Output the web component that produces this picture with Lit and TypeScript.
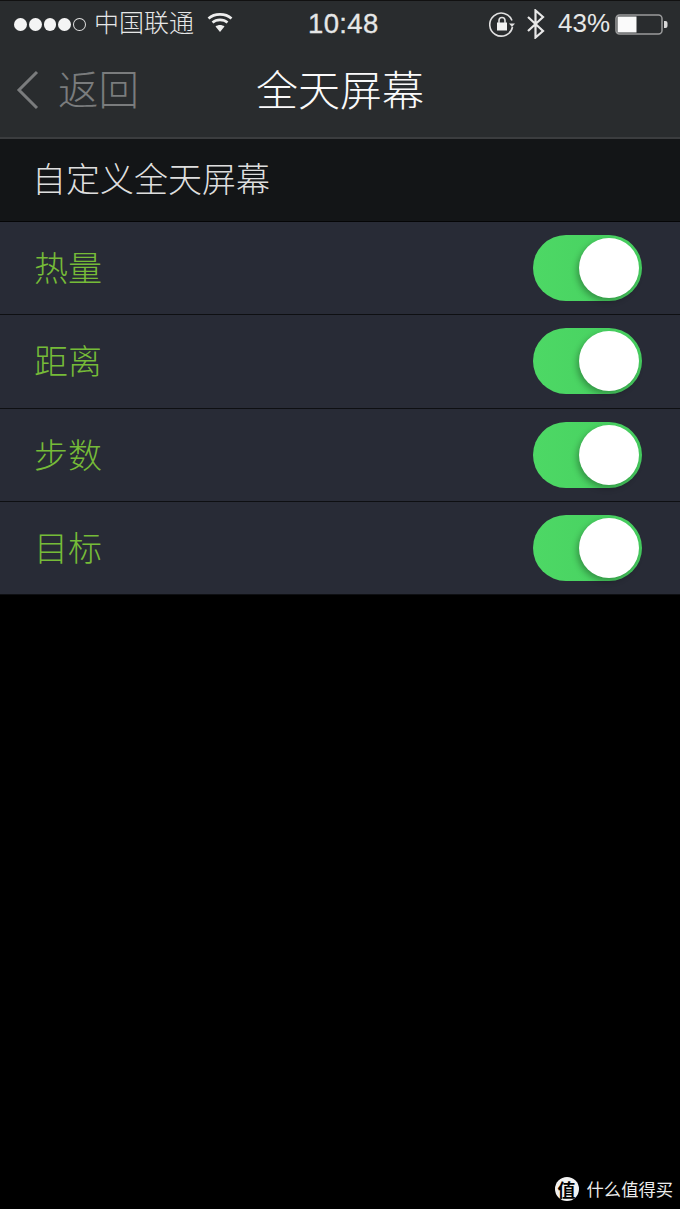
import { LitElement, html, css, svg } from "lit";
import { customElement } from "lit/decorators.js";

const ROWS = ["热量", "距离", "步数", "目标"];

@customElement("app-root")
export class AppRoot extends LitElement {
  static styles = css`
    :host {
      display: block;
      position: relative;
      width: 680px;
      height: 1209px;
      background: #000;
      overflow: hidden;
      font-family: "Noto Sans CJK SC", "Liberation Sans", sans-serif;
      font-weight: 300;
    }
    .top {
      background: #292c2e;
      border-top: 1px solid #111;
      height: 136px;
      border-bottom: 2px solid #3b3d3f;
    }
    .status {
      height: 45px;
      display: flex;
      align-items: center;
      color: #e6e7e7;
      padding: 0 0 0 14px;
    }
    .dots { display: flex; gap: 3px; width: 71px; margin-top: 1px; }
    .dot { width: 13px; height: 13px; border-radius: 50%; background: #f4f4f4; box-sizing: border-box; margin-right: -1px; }
    .dot.off { background: none; border: 1px solid #e0e0e0; }
    .carrier { font-size: 25px; line-height: 41px; height: 45px; width: 112px; margin-left: 9px; white-space: nowrap; }
    .status svg { display: block; flex: none; }
    .wifi { margin-left: 1px; margin-top: -2px; }
    .time {
      font-family: "Liberation Sans", sans-serif;
      font-size: 27.5px;
      font-weight: 400;
      width: 72px;
      margin-left: 75px;
      letter-spacing: 0.35px;
      white-space: nowrap;
      -webkit-text-stroke: 0.3px #e6e7e7;
    }
    .lock { margin-left: 109px; }
    .bt { margin-left: 11px; }
    .pct {
      font-family: "Liberation Sans", sans-serif;
      font-weight: 400;
      font-size: 26px;
      margin-left: 13px;
      white-space: nowrap;
      width: 58px;
    }
    .batt { margin-left: -1px; }
    .nav {
      height: 90px;
      display: flex;
      align-items: center;
      justify-content: center;
      position: relative;
    }
    .back {
      position: absolute;
      left: 16px;
      top: 0;
      height: 88px;
      display: flex;
      align-items: center;
      gap: 19px;
      color: #7a7c7d;
      font-size: 40.5px;
    }
    .back span { padding-bottom: 5px; margin-left: -1px; }
    .title { color: #fafafa; font-size: 42px; line-height: 84px; height: 90px; }
    .head {
      height: 83px;
      box-sizing: border-box;
      background: #131517;
      color: #dedede;
      font-size: 34px;
      line-height: 78px;
      padding-left: 32px;
      border-bottom: 1px solid #050506;
    }
    .row {
      height: 93.3px;
      box-sizing: border-box;
      background: #282b36;
      border-bottom: 1px solid #0e0f12;
      display: flex;
      align-items: center;
      justify-content: space-between;
      padding: 0 38px 0 34px;
      color: #76bb38;
      font-size: 34px;
    }
    .row span { padding-bottom: 3px; }
    .toggle {
      width: 109px;
      height: 66px;
      border-radius: 33px;
      background: linear-gradient(90deg, #4dd865, #47d060);
      position: relative;
      flex: none;
    }
    .knob {
      position: absolute;
      right: 3px;
      top: 3px;
      width: 60px;
      height: 60px;
      border-radius: 50%;
      background: #fff;
      box-shadow: -2px 3px 6px rgba(0, 0, 0, 0.3);
    }
    .mark {
      position: absolute;
      right: 7px;
      bottom: 8px;
      display: flex;
      align-items: center;
      gap: 8px;
      color: #ececec;
      font-size: 17.3px;
      font-weight: 400;
      line-height: 24px;
    }
    .badge {
      width: 24px;
      height: 24px;
      border-radius: 50%;
      background: #f2f2f2;
      color: #000;
      font-size: 18px;
      font-weight: 700;
      display: flex;
      align-items: center;
      justify-content: center;
      overflow: hidden;
    }
  `;

  render() {
    return html`
      <div class="top">
        <div class="status">
          <div class="dots">
            ${[1, 1, 1, 1, 0].map((on) => html`<span class="dot ${on ? "" : "off"}"></span>`)}
          </div>
          <span class="carrier">中国联通</span>
          <svg class="wifi" width="26" height="22" viewBox="0 0 26 22" fill="none" stroke="#ededed" stroke-width="2.6">
            ${svg`<path d="M1.5 6.5C7.5 1 18.500 1 24.500 6.500"/><path d="M5.500 10.500C9.500 7 16.500 7 20.500 10.500"/><path d="M13 20l-4.500-5.500c2.500-2 6.500-2 9 0z" fill="#ededed" stroke="none"/>`}
          </svg>
          <span class="time">10:48</span>
          <svg class="lock" width="26" height="26" viewBox="0 0 26 26" fill="none" stroke="#e0e0e0" stroke-width="1.6">
            ${svg`<path d="M23 9.500A11.500 11.500 0 1 0 23.500 16"/><path d="M20 12.500h6l-3 3.500z" fill="#e0e0e0" stroke="none"/><rect x="8" y="11.500" width="10" height="8" fill="#f2f2f2" stroke="none"/><path d="M10 12V9.500a3 3 0 0 1 6 0V12"/>`}
          </svg>
          <svg class="bt" width="19" height="30" viewBox="0 0 19 30" fill="none" stroke="#e8e8e8" stroke-width="2.2">
            ${svg`<path d="M2 8l15 14-7.500 6.500V1.500L17 8 2 22"/>`}
          </svg>
          <span class="pct">43%</span>
          <svg class="batt" width="53" height="22" viewBox="0 0 53 22">
            ${svg`<rect x="1" y="2" width="46" height="19" rx="3.500" fill="none" stroke="#9a9b9c" stroke-width="1.500"/><rect x="2.500" y="3.500" width="19" height="16" fill="#fafafa"/><path d="M49 8h1.500a2 2 0 0 1 2 2v3a2 2 0 0 1-2 2H49z" fill="#d8d8d8"/>`}
          </svg>
        </div>
        <div class="nav">
          <div class="back">
            <svg width="24" height="40" viewBox="0 0 24 40" fill="none" stroke="#7a7c7d" stroke-width="3">
              ${svg`<path d="M21 2L3 20l18 18"/>`}
            </svg>
            <span>返回</span>
          </div>
          <span class="title">全天屏幕</span>
        </div>
      </div>
      <div class="head">自定义全天屏幕</div>
      ${ROWS.map(
        (r) => html`<div class="row"><span>${r}</span><div class="toggle"><div class="knob"></div></div></div>`
      )}
      <div class="mark"><span class="badge">值</span><span>什么值得买</span></div>
    `;
  }
}
